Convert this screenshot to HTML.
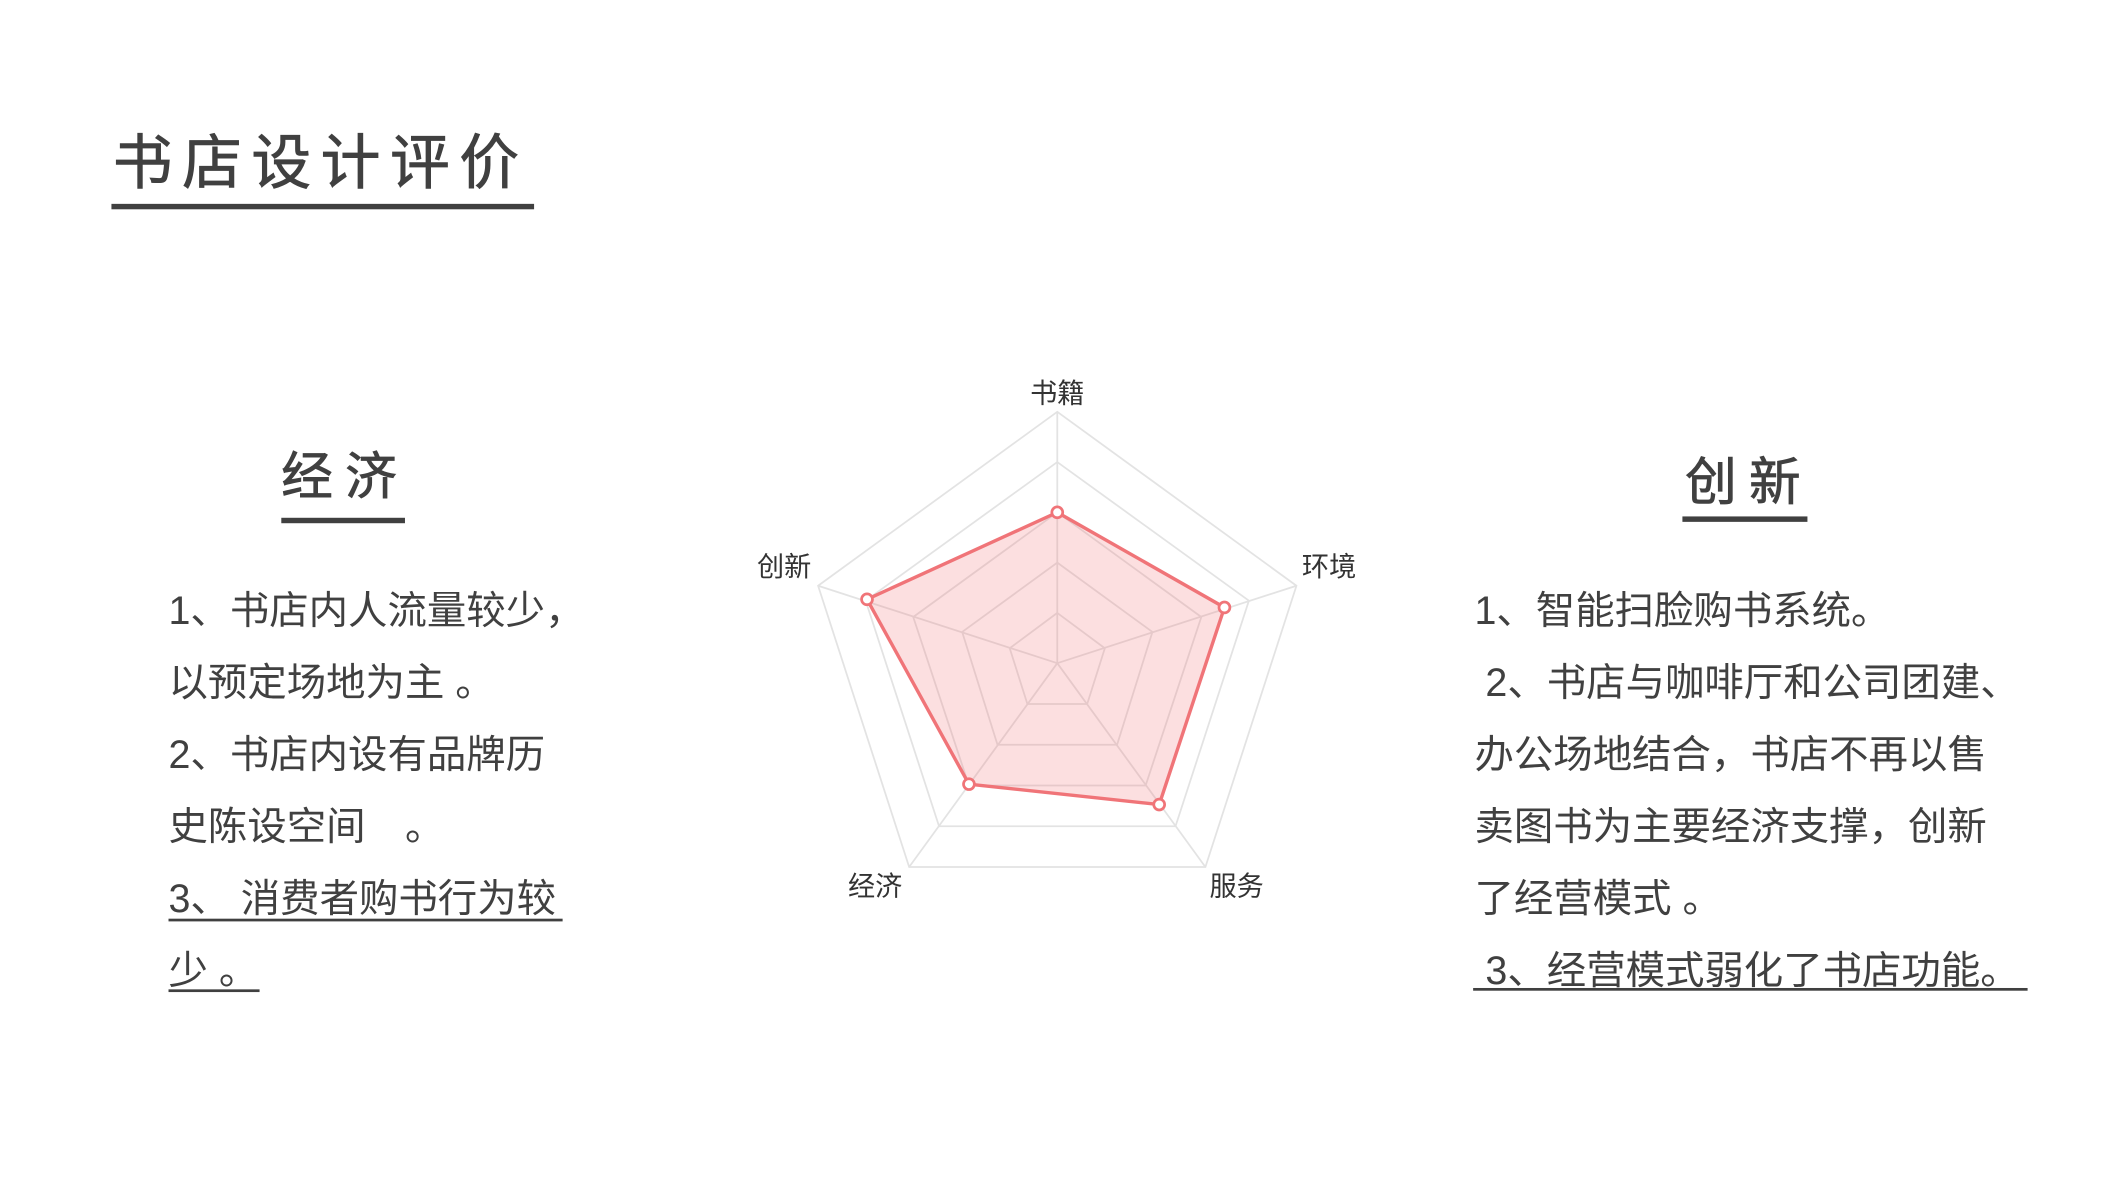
<!DOCTYPE html>
<html><head><meta charset="utf-8"><style>
html,body{margin:0;padding:0;background:#fff;width:2120px;height:1200px;overflow:hidden}
svg{display:block}
text{font-family:"Liberation Sans","Noto Sans CJK SC",sans-serif;fill:#404040}
.h{stroke:#404040;stroke-width:0.6}
</style></head><body>
<svg width="2120" height="1200" viewBox="0 0 1560 883" xmlns="http://www.w3.org/2000/svg">
<rect width="1560" height="883" fill="#fff"/>
<text class="h" x="83" y="135" font-size="44" letter-spacing="7">书店设计评价</text>
<rect x="82" y="150" width="311" height="4" fill="#404040"/>
<text class="h" x="207" y="364" font-size="38" letter-spacing="9">经济</text>
<rect x="207" y="381" width="91" height="4" fill="#404040"/>
<text class="h" x="1240" y="368" font-size="38" letter-spacing="9">创新</text>
<rect x="1238" y="380" width="92" height="4" fill="#404040"/>
<g font-size="29">
<text x="124" y="459">1、书店内人流量较少，</text>
<text x="124" y="512">以预定场地为主 。</text>
<text x="124" y="565">2、书店内设有品牌历</text>
<text x="124" y="618">史陈设空间　。</text>
<text x="124" y="671">3、 消费者购书行为较</text>
<text x="124" y="724">少 。</text>
<text x="1085" y="459">1、智能扫脸购书系统。</text>
<text x="1085" y="512" xml:space="preserve"> 2、书店与咖啡厅和公司团建、</text>
<text x="1085" y="565">办公场地结合，书店不再以售</text>
<text x="1085" y="618">卖图书为主要经济支撑，创新</text>
<text x="1085" y="671">了经营模式 。</text>
<text x="1085" y="724" xml:space="preserve"> 3、经营模式弱化了书店功能。</text>
</g>
<rect x="124" y="676" width="290" height="2" fill="#404040"/>
<rect x="124" y="728" width="67" height="2" fill="#404040"/>
<rect x="1084" y="727" width="408" height="2" fill="#404040"/>
<g fill="none" stroke="#e3e3e3" stroke-width="1.3">
<polygon points="778,303 954,431 887,638 669,638 602,431"/>
<polygon points="778,340 919,442 865,608 691,608 637,442"/>
<polygon points="778,377 884,454 843,578 713,578 672,454"/>
<polygon points="778,414 848,465 822,548 734,548 708,465"/>
<polygon points="778,451 813,477 800,518 756,518 743,477"/>
<line x1="778" y1="488" x2="778" y2="303"/>
<line x1="778" y1="488" x2="954" y2="431"/>
<line x1="778" y1="488" x2="887" y2="638"/>
<line x1="778" y1="488" x2="669" y2="638"/>
<line x1="778" y1="488" x2="602" y2="431"/>
</g>
<polygon points="778,377 901,447 853,592 713,577 638,441" fill="rgba(240,110,115,0.22)" stroke="#f07478" stroke-width="2.5"/>
<g fill="#fff" stroke="#f07478" stroke-width="2">
<circle cx="778" cy="377" r="4"/><circle cx="901" cy="447" r="4"/><circle cx="853" cy="592" r="4"/><circle cx="713" cy="577" r="4"/><circle cx="638" cy="441" r="4"/>
</g>
<g font-size="20">
<text x="778" y="296" text-anchor="middle" style="fill:#333">书籍</text>
<text x="978" y="424" text-anchor="middle" style="fill:#333">环境</text>
<text x="910" y="659" text-anchor="middle" style="fill:#333">服务</text>
<text x="644" y="659" text-anchor="middle" style="fill:#333">经济</text>
<text x="577" y="424" text-anchor="middle" style="fill:#333">创新</text>
</g>
</svg>
</body></html>
